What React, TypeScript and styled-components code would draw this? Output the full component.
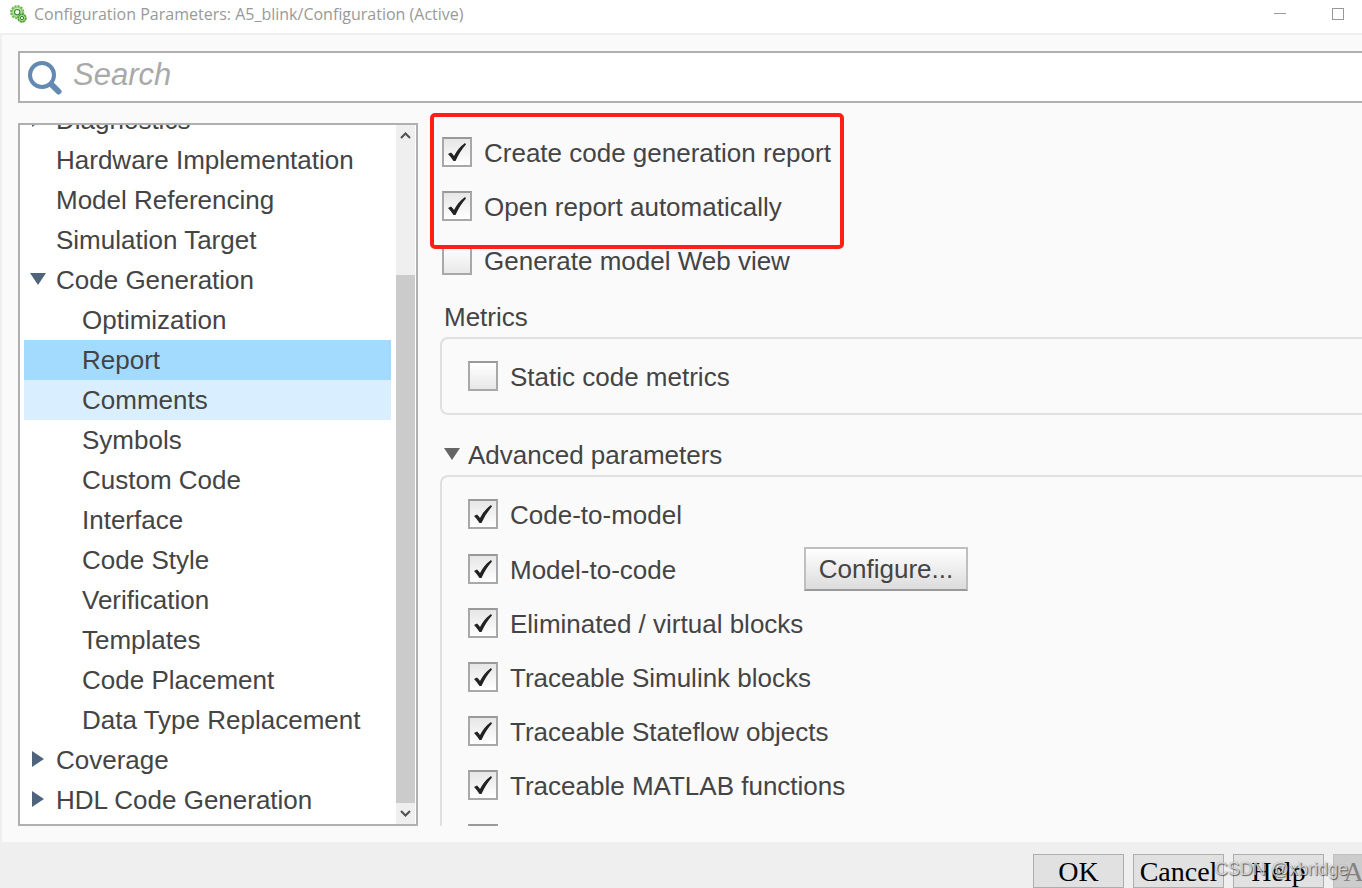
import React from "react";
import styled, { createGlobalStyle, css } from "styled-components";

const Global = createGlobalStyle`
  * { box-sizing: border-box; }
  html, body, #root { height: 100%; }
  body {
    margin: 0;
    overflow: hidden;
    background: #efefef;
    color: #444;
    font: 26px/30px "Liberation Sans", Arial, sans-serif;
  }
`;

const Window = styled.div`
  position: relative;
  display: flex;
  flex-direction: column;
  height: 100vh;
  overflow: hidden;
`;

const TitleBar = styled.header`
  display: flex;
  align-items: center;
  flex: none;
  height: 33px;
  padding: 0 10px 6px;
  background: #fff;
`;

const Title = styled.h1`
  flex: 1;
  margin: 0 0 0 7px;
  color: #999;
  font: 400 16px/24px "Open Sans", "Segoe UI", sans-serif;
`;

const WindowButton = styled.button`
  display: flex;
  align-items: center;
  justify-content: center;
  width: 58px;
  height: 27px;
  padding: 0;
  border: 0;
  background: none;
  &:last-child { margin-right: -15px; }
`;

const Body = styled.main`
  display: flex;
  flex-direction: column;
  flex: 1;
  gap: 20px;
  min-height: 0;
  padding: 16px 0 16px 16px;
  border: solid #efefef;
  border-width: 2px 0 0 2px;
  background: #fafafa;
`;

const SearchBox = styled.label`
  display: flex;
  flex: none;
  height: 52px;
  padding-left: 7px;
  border: 2px solid #b0b0b0;
  border-right: 0;
  background: #fff;
  svg { margin-top: 7px; }
`;

const SearchInput = styled.input`
  flex: 1;
  min-width: 0;
  height: 44px;
  padding: 0 10px;
  border: 0;
  outline: 0;
  background: none;
  font: italic 31px/44px "Liberation Sans", Arial, sans-serif;
  &::placeholder { color: #a9a9a9; opacity: 1; }
`;

const Columns = styled.div`
  display: flex;
  flex: 1;
  gap: 22px;
  min-height: 0;
`;

const TreePanel = styled.nav`
  display: flex;
  flex: none;
  width: 400px;
  padding-right: 1px;
  border: 2px solid #b0b0b0;
  background: #fff;
`;

const Tree = styled.ul`
  display: flex;
  flex: 1;
  flex-direction: column;
  justify-content: flex-end;
  margin: 0;
  padding: 0 5px 4px 4px;
  overflow: hidden;
  list-style: none;
`;

const TreeItem = styled.li<{ $child?: boolean; $state?: "selected" | "hover" }>`
  display: flex;
  flex: none;
  align-items: center;
  height: 40px;
  padding-left: ${(p) => (p.$child ? 58 : 32)}px;
  ${(p) => p.$state === "selected" && css`background: #a3daff;`}
  ${(p) => p.$state === "hover" && css`background: #d9efff;`}
`;

const Arrow = styled.svg`
  flex: none;
  width: 16px;
  height: 16px;
  margin: 0 10px 2px -26px;
`;

const ScrollBar = styled.div`
  display: flex;
  flex: none;
  flex-direction: column;
  width: 19px;
  background: #efefef;
`;

const ScrollButton = styled.button`
  display: flex;
  flex: none;
  align-items: center;
  justify-content: center;
  height: 21px;
  padding: 0;
  border: 0;
  background: none;
`;

const ScrollTrack = styled.div`
  display: grid;
  flex: 1;
  grid-template-rows: 10fr 41fr;
`;

const ScrollThumb = styled.div`
  grid-row: 2;
  background: #cbcbcb;
`;

const Content = styled.div`
  position: relative;
  flex: 1;
  min-width: 0;
`;

const Settings = styled.form`
  height: 100%;
  padding-top: 2px;
  overflow: hidden;
`;

const Options = styled.div`
  padding-left: 2px;
`;

const OptionRow = styled.div`
  display: flex;
  align-items: center;
  min-height: 54px;
`;

const OptionLabel = styled.label`
  display: flex;
  align-items: center;
  gap: 12px;
  width: 336px;
  white-space: nowrap;
`;

const OptionText = styled.span`
  padding-top: 2px;
  line-height: 28px;
`;

const Check = styled.input`
  appearance: none;
  flex: none;
  width: 30px;
  height: 30px;
  margin: 0;
  border: 2px solid #a8a8a8;
  border-top-color: #999;
  background: linear-gradient(#fff, #e8e8e8);
  &:checked { background: linear-gradient(#e6e6e6, #fff); }
`;

const CheckHolder = styled.span`
  position: relative;
  display: flex;
  svg {
    position: absolute;
    inset: 0;
    pointer-events: none;
  }
`;

const SectionTitle = styled.h2<{ $gap: number }>`
  display: flex;
  align-items: center;
  gap: 8px;
  margin: ${(p) => p.$gap}px 0 5px;
  padding-left: 4px;
  font: inherit;
  svg { margin-bottom: 2px; }
`;

const Group = styled.section`
  padding: 10px 0 10px 26px;
  border: 2px solid #e0e0e0;
  border-right: 0;
  border-radius: 8px 0 0 8px;
`;

const ConfigureButton = styled.button`
  width: 164px;
  height: 44px;
  margin: 6px 0 5px;
  padding: 0;
  border: 2px solid #bfbfbf;
  border-bottom-color: #999;
  background: linear-gradient(#fff, #dcdcdc);
  color: #444;
  font: inherit;
`;

const Highlight = styled.div`
  position: absolute;
  top: -10px;
  left: -10px;
  width: 414px;
  height: 136px;
  border: 4px solid #ff2015;
  border-radius: 5px;
  pointer-events: none;
`;

const Footer = styled.footer`
  display: flex;
  flex: none;
  justify-content: flex-end;
  gap: 9px;
  height: 46px;
  margin-right: -62px;
  padding-top: 12px;
`;

const DialogButton = styled.button`
  width: 91px;
  height: 34px;
  padding: 2px 0 0;
  border: 1px solid #adadad;
  background: #e1e1e1;
  color: #000;
  font: 28px/30px "Liberation Serif", SimSun, serif;
  &:disabled {
    border-color: #bfbfbf;
    background: #ccc;
    color: #838383;
  }
`;

const Watermark = styled.div`
  position: absolute;
  right: 14px;
  bottom: 7px;
  color: rgba(255, 255, 255, 0.7);
  font: 18px/24px "Liberation Sans", Arial, sans-serif;
  text-shadow: 1px 1px 1px rgba(0, 0, 0, 0.55), 0 0 1px rgba(0, 0, 0, 0.4);
`;

const GearIcon = () => (
  <svg width="17" height="18" viewBox="0 0 17 18" aria-hidden="true">
    <circle cx="7.2" cy="7.2" r="6.2" fill="none" stroke="#6cb84c" strokeWidth="1.8" strokeDasharray="2.2 1" />
    <circle cx="7.2" cy="7.2" r="5.2" fill="#c4ebaa" stroke="#7cc45c" strokeWidth="1.2" />
    <circle cx="7.2" cy="7.2" r="2.7" fill="#f4fbef" stroke="#3f8a3a" strokeWidth="1.2" />
    <circle cx="12" cy="13" r="3.9" fill="#a9dd86" stroke="#4c9f38" strokeWidth="1.6" strokeDasharray="2.4 .5" />
    <circle cx="12" cy="13" r="1.6" fill="#fff" stroke="#2f7a2d" />
  </svg>
);

const SearchIcon = () => (
  <svg width="36" height="38" viewBox="0 0 36 38" aria-hidden="true">
    <path d="M23 23 L31.500 31.500" stroke="#658ab2" strokeWidth="6" strokeLinecap="round" />
    <circle cx="15" cy="15" r="12" fill="#fff" stroke="#658ab2" strokeWidth="4" />
  </svg>
);

const Triangle = ({ open, color = "#4e647c" }: { open: boolean; color?: string }) => (
  <path d={open ? "M0 2H16L8 14Z" : "M2 0L14 8L2 16Z"} fill={color} />
);

const Chevron = ({ down }: { down?: boolean }) => (
  <svg width="11" height="7" viewBox="0 0 11 7" fill="none" stroke="#505050" strokeWidth="2" aria-hidden="true">
    <path d={down ? "M1 1L5.500 5.500L10 1" : "M1 6L5.500 1.500L10 6"} />
  </svg>
);

type Node = { name: string; child?: boolean; open?: boolean; state?: "selected" | "hover" };

const nodes: Node[] = [
  { name: "Diagnostics", open: false },
  { name: "Hardware Implementation" },
  { name: "Model Referencing" },
  { name: "Simulation Target" },
  { name: "Code Generation", open: true },
  { name: "Optimization", child: true },
  { name: "Report", child: true, state: "selected" },
  { name: "Comments", child: true, state: "hover" },
  { name: "Symbols", child: true },
  { name: "Custom Code", child: true },
  { name: "Interface", child: true },
  { name: "Code Style", child: true },
  { name: "Verification", child: true },
  { name: "Templates", child: true },
  { name: "Code Placement", child: true },
  { name: "Data Type Replacement", child: true },
  { name: "Coverage", open: false },
  { name: "HDL Code Generation", open: false },
];

const traceOptions = [
  "Eliminated / virtual blocks",
  "Traceable Simulink blocks",
  "Traceable Stateflow objects",
  "Traceable MATLAB functions",
];

function Option({ label, checked, children }: { label: string; checked?: boolean; children?: React.ReactNode }) {
  const [on, setOn] = React.useState(!!checked);
  return (
    <OptionRow>
      <OptionLabel>
        <CheckHolder>
          <Check type="checkbox" checked={on} onChange={() => setOn(!on)} aria-label={label || "More"} />
          {on && (
            <svg width="30" height="30" viewBox="0 0 30 30" aria-hidden="true">
              <path d="M6 17L9 15.500Q11 17 12 19Q16 11 23 6L24 7.500Q18 14 13.500 24H11.500Q9 20 6 17Z" fill="#222" />
            </svg>
          )}
        </CheckHolder>
        <OptionText>{label}</OptionText>
      </OptionLabel>
      {children}
    </OptionRow>
  );
}

export default function App() {
  return (
    <>
      <Global />
      <Window>
        <TitleBar>
          <GearIcon />
          <Title>Configuration Parameters: A5_blink/Configuration (Active)</Title>
          <WindowButton aria-label="Minimize">
            <svg width="12" height="12" aria-hidden="true"><path d="M0 5.500H12" stroke="#999" /></svg>
          </WindowButton>
          <WindowButton aria-label="Maximize">
            <svg width="12" height="12" aria-hidden="true"><rect x=".5" y=".5" width="11" height="11" fill="none" stroke="#999" /></svg>
          </WindowButton>
        </TitleBar>
        <Body>
          <SearchBox>
            <SearchIcon />
            <SearchInput placeholder="Search" aria-label="Search" />
          </SearchBox>
          <Columns>
            <TreePanel>
              <Tree>
                {nodes.map((n) => (
                  <TreeItem key={n.name} $child={n.child} $state={n.state}>
                    {n.open !== undefined && (
                      <Arrow viewBox="0 0 16 16" aria-hidden="true"><Triangle open={n.open} /></Arrow>
                    )}
                    {n.name}
                  </TreeItem>
                ))}
              </Tree>
              <ScrollBar>
                <ScrollButton aria-label="Scroll up"><Chevron /></ScrollButton>
                <ScrollTrack><ScrollThumb /></ScrollTrack>
                <ScrollButton aria-label="Scroll down"><Chevron down /></ScrollButton>
              </ScrollBar>
            </TreePanel>
            <Content>
              <Settings>
                <Options>
                  <Option label="Create code generation report" checked />
                  <Option label="Open report automatically" checked />
                  <Option label="Generate model Web view" />
                </Options>
                <SectionTitle $gap={15}>Metrics</SectionTitle>
                <Group>
                  <Option label="Static code metrics" />
                </Group>
                <SectionTitle $gap={25}>
                  <svg width="16" height="16" viewBox="0 0 16 16" aria-hidden="true"><Triangle open color="#666" /></svg>
                  Advanced parameters
                </SectionTitle>
                <Group>
                  <Option label="Code-to-model" checked />
                  <Option label="Model-to-code" checked>
                    <ConfigureButton type="button">Configure...</ConfigureButton>
                  </Option>
                  {traceOptions.map((o) => <Option key={o} label={o} checked />)}
                  <Option label="" />
                </Group>
              </Settings>
              <Highlight />
            </Content>
          </Columns>
        </Body>
        <Footer>
          <DialogButton>OK</DialogButton>
          <DialogButton>Cancel</DialogButton>
          <DialogButton>Help</DialogButton>
          <DialogButton disabled>Apply</DialogButton>
        </Footer>
        <Watermark>CSDN @xbridge</Watermark>
      </Window>
    </>
  );
}
